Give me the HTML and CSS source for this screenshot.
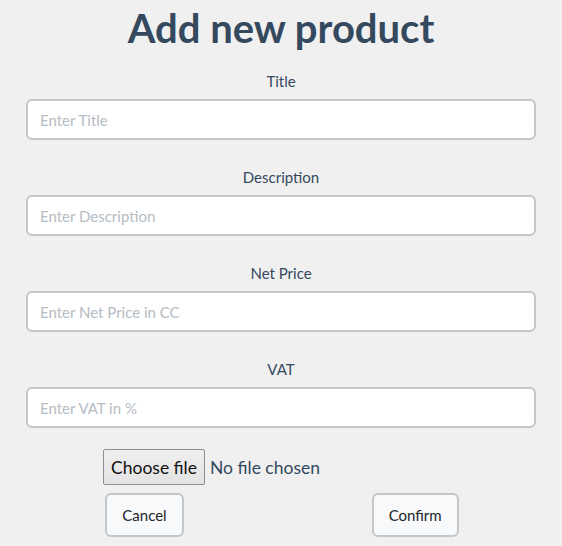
FILE: index.html
```html
<!DOCTYPE html>
<html>
<head>
<meta charset="utf-8">
<link rel="stylesheet" href="styles.css">
</head>
<body>
<div class="page">
  <h1 class="heading">Add new product</h1>
  <form class="form">
    <div class="field">
      <label class="label">Title</label>
      <input class="input" type="text" placeholder="Enter Title">
    </div>
    <div class="field">
      <label class="label">Description</label>
      <input class="input" type="text" placeholder="Enter Description">
    </div>
    <div class="field">
      <label class="label">Net Price</label>
      <input class="input" type="text" placeholder="Enter Net Price in CC">
    </div>
    <div class="field">
      <label class="label">VAT</label>
      <input class="input" type="text" placeholder="Enter VAT in %">
    </div>
    <div class="file-row">
      <span class="file-btn">Choose file</span>
      <span class="file-text">No file chosen</span>
    </div>
    <div class="actions">
      <button type="button" class="btn">Cancel</button>
      <button type="button" class="btn">Confirm</button>
    </div>
  </form>
</div>
</body>
</html>
```
FILE: styles.css
```css
html, body {
  margin: 0;
  padding: 0;
  background: #f0f0f0;
}
body {
  font-family: Lato, "Open Sans", sans-serif;
  color: #34495e;
}
.page {
  padding: 4px 26px 0;
}
.heading {
  margin: 0;
  font-size: 40px;
  line-height: 48px;
  font-weight: 700;
  text-align: center;
  color: #34495e;
}
.form {
  display: flex;
  flex-direction: column;
  margin-top: 20px;
}
.field {
  display: flex;
  flex-direction: column;
  align-items: center;
  margin-bottom: 28px;
}
.field:nth-child(4) {
  margin-bottom: 21px;
}
.label {
  font-size: 15px;
  line-height: 18px;
  margin-bottom: 9px;
  color: #34495e;
}
.input {
  box-sizing: border-box;
  width: 100%;
  height: 41px;
  border: 2px solid #c3c7cb;
  border-radius: 6px;
  background: #fff;
  padding: 0 12px;
  font-family: Lato, sans-serif;
  font-size: 15px;
  color: #34495e;
  outline: none;
}
.input::placeholder {
  color: #b4bcc4;
}
.file-row {
  display: flex;
  align-items: center;
  padding-left: 77px;
  height: 36px;
}
.file-btn {
  box-sizing: border-box;
  height: 36px;
  display: flex;
  align-items: center;
  padding: 0 7px;
  background: linear-gradient(#efefef, #e3e3e3);
  border: 1px solid #8f8f8f;
  border-radius: 2px;
  font-size: 17.5px;
  color: #111;
}
.file-text {
  margin-left: 5px;
  font-size: 17.5px;
  color: #34495e;
}
.actions {
  display: flex;
  justify-content: center;
  gap: 188px;
  margin-top: 8px;
  padding-left: 2px;
}
.btn {
  box-sizing: border-box;
  height: 44px;
  padding: 0 15px;
  background: #f8f9fa;
  border: 2px solid #c3c7cb;
  border-radius: 6px;
  font-family: Lato, sans-serif;
  font-size: 15px;
  color: #212529;
}
```
